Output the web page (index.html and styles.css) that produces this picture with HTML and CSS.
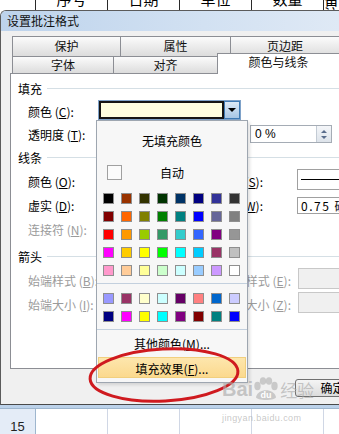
FILE: index.html
```html
<!DOCTYPE html>
<html lang="zh-CN">
<head>
    <meta charset="UTF-8">
    <meta name="viewport" content="width=device-width, initial-scale=1.0">
    <title>设置批注格式</title>
    <link rel="stylesheet" href="styles.css">
</head>
<body>
    <div class="sheet-top">
        <div class="cell corner"></div>
        <div class="cell"><span>序号</span></div>
        <div class="cell"><span>日期</span></div>
        <div class="cell"><span>单位</span></div>
        <div class="cell"><span>数量</span></div>
        <div class="cell last"><span>备注</span></div>
    </div>

    <div class="dialog">
        <div class="titlebar">设置批注格式</div>
        <div class="dialog-body">
            <div class="tab-row top">
                <div class="tab">保护</div>
                <div class="tab">属性</div>
                <div class="tab">页边距</div>
            </div>
            <div class="tab-row bottom">
                <div class="tab">字体</div>
                <div class="tab">对齐</div>
                <div class="tab active">颜色与线条</div>
            </div>

            <div class="panel">
                <div class="group">填充</div>
                <div class="row first">
                    <span class="lbl">颜色 (<u>C</u>):</span>
                    <div class="combo">
                        <div class="combo-field"></div>
                        <div class="combo-btn"></div>
                    </div>
                </div>
                <div class="row">
                    <span class="lbl">透明度 (<u>T</u>):</span>
                    <div class="slot"></div>
                    <div class="spin">
                        <span class="spin-text">0 %</span>
                        <span class="spin-btns"><i class="up"></i><i class="down"></i></span>
                    </div>
                </div>

                <div class="group gap-s">线条</div>
                <div class="row">
                    <span class="lbl">颜色 (<u>O</u>):</span>
                    <span class="rlbl">样式 (<u>S</u>):</span>
                    <div class="box line-box"></div>
                </div>
                <div class="row">
                    <span class="lbl">虚实 (<u>D</u>):</span>
                    <span class="rlbl">粗细 (<u>W</u>):</span>
                    <div class="box weight-box">0.75 磅</div>
                </div>
                <div class="row">
                    <span class="lbl off">连接符 (<u>N</u>):</span>
                </div>

                <div class="group gap-l">箭头</div>
                <div class="row">
                    <span class="lbl off">始端样式 (<u>B</u>):</span>
                    <span class="rlbl wide off">末端样式 (<u>E</u>):</span>
                    <div class="box off-box"></div>
                </div>
                <div class="row">
                    <span class="lbl off">始端大小 (<u>I</u>):</span>
                    <span class="rlbl wide off">末端大小 (<u>Z</u>):</span>
                    <div class="box off-box"></div>
                </div>
            </div>

            <div class="dialog-foot">
                <button class="btn">确定</button>
            </div>
        </div>
    </div>
    <div class="frame-edge"></div>

    <div class="sheet-bottom">
        <div class="rowhead">15</div>
        <div class="cell"></div>
        <div class="cell"></div>
        <div class="cell"></div>
        <div class="cell"></div>
        <div class="cell last"></div>
    </div>

    <!-- colour drop-down, open over the panel -->
    <div class="popup">
        <div class="pop-none">无填充颜色</div>
        <div class="pop-auto"><span class="auto-box"></span><span class="auto-text">自动</span></div>
        <div class="swatches" id="mainColors"></div>
        <div class="pop-sep sep-mid"></div>
        <div class="swatches" id="extraColors"></div>
        <div class="pop-sep"></div>
        <div class="pop-more">其他颜色(<u>M</u>)...</div>
        <div class="pop-fill">填充效果(<u>F</u>)...</div>
    </div>

    <svg class="circle-mark" width="160" height="62" viewBox="0 0 160 62">
        <ellipse cx="80" cy="31" rx="74" ry="26" transform="rotate(-3 80 31)"
                 fill="none" stroke="#cf1a1f" stroke-width="3"/>
    </svg>

    <div class="watermark">
        <div class="wm-logo">
            <span class="wm-bai">Bai</span>
            <svg width="26" height="24" viewBox="0 0 26 24">
                <ellipse cx="4.5" cy="9" rx="3.2" ry="4.2" fill="rgba(175,175,175,0.6)"/>
                <ellipse cx="10" cy="4" rx="3.2" ry="3.8" fill="rgba(175,175,175,0.6)"/>
                <ellipse cx="16" cy="4" rx="3.2" ry="3.8" fill="rgba(175,175,175,0.6)"/>
                <ellipse cx="21.5" cy="9" rx="3.2" ry="4.2" fill="rgba(175,175,175,0.6)"/>
                <path d="M3 20 C5 11 21 11 23 20 C23 24 3 24 3 20 Z" fill="rgba(175,175,175,0.6)"/>
                <text x="13" y="21" text-anchor="middle" font-size="9" font-weight="bold" font-family="Liberation Sans" fill="#fff">du</text>
            </svg>
            <span class="wm-jy">经验</span>
        </div>
        <div class="wm-url">jingyan.baidu.com</div>
    </div>

    <script>
        const mainColors = [
            '#000000', '#993300', '#333300', '#003300', '#003366', '#000080', '#333399', '#333333',
            '#800000', '#ff6600', '#808000', '#008000', '#008080', '#0000ff', '#666699', '#808080',
            '#ff0000', '#ff9900', '#99cc00', '#339966', '#33cccc', '#3366ff', '#800080', '#969696',
            '#ff00ff', '#ffcc00', '#ffff00', '#00ff00', '#00ffff', '#00ccff', '#993366', '#c0c0c0',
            '#ff99cc', '#ffcc99', '#ffff99', '#ccffcc', '#ccffff', '#99ccff', '#cc99ff', '#ffffff'
        ];
        const extraColors = [
            '#9999ff', '#993366', '#ffffcc', '#ccffff', '#660066', '#ff8080', '#0066cc', '#ccccff',
            '#000080', '#ff00ff', '#ffff00', '#00ffff', '#800080', '#800000', '#008080', '#0000ff'
        ];

        function fillSwatches(id, colors) {
            const box = document.getElementById(id);
            colors.forEach(c => {
                const sw = document.createElement('span');
                sw.className = 'sw';
                sw.style.background = c;
                box.appendChild(sw);
            });
        }

        fillSwatches('mainColors', mainColors);
        fillSwatches('extraColors', extraColors);
    </script>
</body>
</html>
```

FILE: styles.css
```css
* {
    box-sizing: border-box;
}

html, body {
    margin: 0;
}

body {
    position: relative;
    width: 339px;
    height: 434px;
    overflow: hidden;
    font-family: "Noto Sans CJK SC", "Liberation Sans", sans-serif;
    font-size: 12px;
    color: #000;
    background-color: #fff;
}

u {
    text-decoration: underline;
}

/* spreadsheet behind the dialog */
.sheet-top {
    display: flex;
    height: 10px;
    overflow: hidden;
}

.sheet-top .cell {
    width: 72px;
    flex: none;
    height: 10px;
    overflow: hidden;
    border-right: 1px solid #2a2a2a;
    text-align: center;
}

.sheet-top .cell span {
    display: block;
    font-size: 15px;
    line-height: 15px;
    margin-top: -9px;
}

.sheet-top .corner {
    width: 36px;
}

.sheet-top .last,
.sheet-bottom .last {
    flex: 1;
    border-right: none;
}

.sheet-bottom {
    display: flex;
    height: 26px;
    border-top: 1px solid #9eb6ce;
}

.sheet-bottom .rowhead {
    width: 36px;
    flex: none;
    background-color: #e4ecf7;
    border-right: 1px solid #9eb6ce;
    text-align: center;
    font-family: "Liberation Sans", sans-serif;
    font-size: 13px;
    line-height: 16px;
    padding-top: 10px;
    color: #222;
}

.sheet-bottom .cell {
    width: 72px;
    flex: none;
    border-right: 1px solid #d0d7e5;
}

/* dialog frame */
.dialog {
    background-color: #f0f0f0;
    border-top: 1px solid #5b5b5b;
    border-left: 1px solid #5b5b5b;
    border-bottom: 1px solid #4a4a4a;
    border-top-left-radius: 6px;
}

.titlebar {
    height: 20px;
    line-height: 20px;
    padding-left: 6px;
    font-size: 12px;
    color: #111;
    background: linear-gradient(to right, #bdd3ec, #d2e1f2 60%, #dfe9f5);
    border-top-left-radius: 5px;
}

.frame-edge {
    height: 3px;
    background-color: #bcd2ea;
}

.dialog-body {
    padding: 5px 0 0 9px;
}

/* tabs */
.tab-row {
    display: flex;
    margin-left: 2px;
}

.tab-row.top {
    height: 20px;
}

.tab-row.bottom {
    height: 17px;
}

.tab {
    flex: none;
    text-align: center;
    border: 1px solid #8c8e94;
    border-bottom: none;
    border-right: none;
    background: linear-gradient(#fbfbfb, #dcdcdc);
    color: #111;
}

.tab-row.top .tab {
    line-height: 18px;
}

.tab-row.top .tab:nth-child(1) { width: 108px; }
.tab-row.top .tab:nth-child(2) { width: 110px; }
.tab-row.top .tab:nth-child(3) { flex: 1; }

.tab-row.bottom .tab {
    line-height: 16px;
}

.tab-row.bottom .tab:nth-child(1) { width: 101px; }
.tab-row.bottom .tab:nth-child(2) { width: 104px; }

.tab.active {
    flex: 1;
    position: relative;
    z-index: 1;
    height: 21px;
    margin-top: -3px;
    line-height: 20px;
    background: #fff;
}

/* tab page */
.panel {
    height: 296px;
    background-color: #fff;
    border: 1px solid #8c8e94;
    border-right: none;
    padding: 6px 0 0 7px;
}

.group {
    display: flex;
    align-items: center;
    height: 16px;
    margin-bottom: 4px;
}

.group::after {
    content: "";
    flex: 1;
    height: 1px;
    margin-left: 5px;
    background-color: #d5dfe5;
}

.group.gap-s {
    margin-top: 3px;
}

.group.gap-l {
    margin-top: 7px;
}

.row {
    display: flex;
    align-items: center;
    height: 24px;
}

.row.first {
    height: 22px;
}

.lbl {
    flex: none;
    width: 80px;
    padding-left: 10px;
    white-space: nowrap;
}

.off {
    color: #9b9b9b;
}

.rlbl {
    flex: none;
    width: 165px;
    margin-right: 34px;
    text-align: right;
    white-space: nowrap;
}

.rlbl.wide {
    width: 193px;
    margin-right: 7px;
}

.combo {
    display: flex;
    align-self: flex-start;
    width: 143px;
    height: 20px;
    border: 1px solid #7fa2c9;
}

.combo-field {
    flex: 1;
    background-color: #fefee0;
    border: 2px solid #151515;
}

.combo-btn {
    width: 16px;
    display: flex;
    align-items: center;
    justify-content: center;
    background: linear-gradient(#dce9f6, #a7c6e5);
    border: 1px solid #3e7ab4;
}

.combo-btn::after {
    content: "";
    border-left: 4px solid transparent;
    border-right: 4px solid transparent;
    border-top: 4px solid #000;
}

.slot {
    flex: none;
    width: 152px;
}

.spin {
    display: flex;
    align-items: center;
    width: 82px;
    height: 18px;
    padding-left: 4px;
    border: 1px solid #a5acb5;
    background-color: #fff;
}

.spin-text {
    flex: 1;
    font-family: "Liberation Sans", sans-serif;
}

.spin-btns {
    width: 15px;
    height: 16px;
    display: flex;
    flex-direction: column;
    align-items: center;
    justify-content: space-around;
    background: linear-gradient(#f4f6f9, #dde3ea);
    border-left: 1px solid #c3cbd4;
    padding: 2px 0;
}

.spin-btns i {
    border-left: 3px solid transparent;
    border-right: 3px solid transparent;
}

.spin-btns .up {
    border-bottom: 3px solid #5a6d8c;
}

.spin-btns .down {
    border-top: 3px solid #5a6d8c;
}

.box {
    flex: none;
    width: 50px;
    align-self: flex-start;
    border: 1px solid #a0a0a0;
    background-color: #fff;
}

.line-box {
    height: 21px;
    display: flex;
    align-items: center;
    padding-left: 3px;
}

.line-box::after {
    content: "";
    flex: 1;
    height: 1px;
    background-color: #000;
}

.weight-box {
    align-self: center;
    height: 17px;
    padding-left: 3px;
    line-height: 15px;
    letter-spacing: 1.5px;
    white-space: nowrap;
    overflow: hidden;
}

.off-box {
    height: 21px;
    background-color: #f0f0f0;
    border-color: #c8c8c8;
}

.dialog-foot {
    height: 35px;
    padding: 10px 0 0 285px;
}

.btn {
    display: block;
    width: 75px;
    height: 18px;
    padding: 0;
    font-family: inherit;
    font-size: 12px;
    line-height: 16px;
    color: #000;
    border: 1px solid #707070;
    border-radius: 3px;
    background: linear-gradient(#f4f4f4, #dcdcdc);
}

/* colour popup */
.popup {
    position: absolute;
    left: 96px;
    top: 120px;
    width: 152px;
    height: 263px;
    background-color: #f7f7f7;
    border: 1px solid #9ea6b0;
    box-shadow: 2px 2px 3px rgba(0, 0, 0, 0.12);
}

.pop-none {
    height: 40px;
    line-height: 40px;
    text-align: center;
}

.pop-auto {
    display: flex;
    align-items: center;
    height: 22px;
    padding-right: 25px;
}

.auto-box {
    width: 15px;
    height: 15px;
    margin-left: 10px;
    border: 1px solid #a0a0a0;
    background-color: #fbfbfb;
}

.auto-text {
    flex: 1;
    text-align: center;
}

.swatches {
    display: grid;
    grid-template-columns: repeat(8, 11px);
    grid-auto-rows: 11px;
    gap: 7px;
    padding-left: 6px;
}

#mainColors {
    margin-top: 10px;
}

.sw {
    display: block;
    border: 1px solid #8f8f8f;
}

.pop-sep {
    height: 1px;
    margin: 7px 0 0;
    background-color: #c3d0de;
}

.pop-sep.sep-mid {
    margin-bottom: 9px;
}

.pop-more {
    height: 27px;
    line-height: 27px;
    text-align: center;
}

.pop-fill {
    height: 21px;
    line-height: 21px;
    margin: 0 1px;
    text-align: center;
    background: linear-gradient(#fde6ad, #fbd98e);
    border: 1px solid #f1cf7e;
}

/* red marker and watermark */
.circle-mark {
    position: absolute;
    left: 84px;
    top: 344px;
}

.watermark {
    position: absolute;
    left: 222px;
    top: 377px;
    width: 100px;
    color: rgba(170, 170, 170, 0.65);
}

.wm-logo {
    display: flex;
    align-items: center;
    height: 24px;
}

.wm-bai {
    font-family: "Liberation Sans", sans-serif;
    font-weight: bold;
    font-size: 20px;
}

.wm-jy {
    font-size: 17px;
    margin-left: 1px;
}

.wm-url {
    font-family: "Liberation Sans", sans-serif;
    font-size: 9px;
    margin-top: 12px;
    letter-spacing: 0.4px;
}
```
